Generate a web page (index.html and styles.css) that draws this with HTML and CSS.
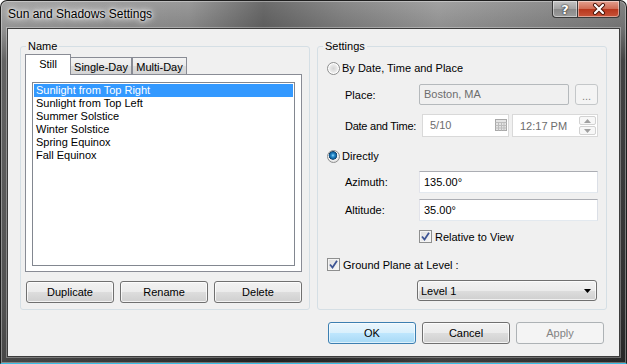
FILE: index.html
```html
<!DOCTYPE html>
<html lang="en">
<head>
  <meta charset="UTF-8" />
  <title>Sun and Shadows Settings</title>
  <link rel="stylesheet" href="styles.css">
</head>
<body>

<div class="window">
  <div class="titlebar">
    <span class="title">Sun and Shadows Settings</span>
    <div class="caption-btns">
      <span class="cap-btn help">?</span>
      <span class="cap-btn close">
        <svg width="16" height="12" viewBox="0 0 16 12">
          <path d="M4 2 L12 10 M12 2 L4 10" stroke="#4a1409" stroke-width="4" stroke-linecap="round" fill="none"/>
          <path d="M4 2 L12 10 M12 2 L4 10" stroke="#fff" stroke-width="2.2" stroke-linecap="round" fill="none"/>
        </svg>
      </span>
    </div>
  </div>

  <div class="client">
    <div class="groups">
      <fieldset class="group name-group">
        <legend>Name</legend>
        <div class="tabs">
          <span class="tab active">Still</span>
          <span class="tab single">Single-Day</span>
          <span class="tab multi">Multi-Day</span>
        </div>
        <div class="tab-panel">
          <ul class="list">
            <li class="selected">Sunlight from Top Right</li>
            <li>Sunlight from Top Left</li>
            <li>Summer Solstice</li>
            <li>Winter Solstice</li>
            <li>Spring Equinox</li>
            <li>Fall Equinox</li>
          </ul>
        </div>
        <div class="name-btns">
          <button class="btn">Duplicate</button>
          <button class="btn">Rename</button>
          <button class="btn">Delete</button>
        </div>
      </fieldset>

      <fieldset class="group settings-group">
        <legend>Settings</legend>
        <div class="row r-bydate"><span class="radio"></span>By Date, Time and Place</div>
        <div class="row r-place">
          <span class="lbl">Place:</span>
          <div class="input off grow">Boston, MA</div>
          <span class="dots">...</span>
        </div>
        <div class="row r-date">
          <span class="lbl tight">Date and Time:</span>
          <div class="input dim date">
            <span class="grow">5/10</span>
            <svg width="12" height="12" viewBox="0 0 12 12">
              <rect x="0.5" y="0.5" width="11" height="11" fill="#e4e4e4" stroke="#a8a8a8"/>
              <path d="M0.5 3.5 H11.5 M0.5 6.5 H11.5 M0.5 9 H11.5 M3.5 3.5 V11.5 M6.5 3.5 V11.5 M9 3.5 V11.5" stroke="#bdbdbd" fill="none"/>
            </svg>
          </div>
          <div class="input dim time grow">
            <span class="grow">12:17 PM</span>
            <span class="spin">
              <span class="spin-btn"><svg width="7" height="4" viewBox="0 0 7 4"><path d="M0 4 L3.5 0 L7 4 Z" fill="#a0a0a0"/></svg></span>
              <span class="spin-btn"><svg width="7" height="4" viewBox="0 0 7 4"><path d="M0 0 L3.5 4 L7 0 Z" fill="#a0a0a0"/></svg></span>
            </span>
          </div>
        </div>
        <div class="row r-directly"><span class="radio on"></span>Directly</div>
        <div class="row r-az">
          <span class="lbl">Azimuth:</span>
          <div class="input grow">135.00°</div>
        </div>
        <div class="row r-alt">
          <span class="lbl">Altitude:</span>
          <div class="input grow">35.00°</div>
        </div>
        <div class="row r-rel">
          <span class="check">
            <svg width="9" height="9" viewBox="0 0 9 9"><path d="M1 4.5 L3.5 7.5 L8 0.8" stroke="#3d5494" stroke-width="1.8" fill="none"/></svg>
          </span>Relative to View
        </div>
        <div class="row r-ground">
          <span class="check">
            <svg width="9" height="9" viewBox="0 0 9 9"><path d="M1 4.5 L3.5 7.5 L8 0.8" stroke="#3d5494" stroke-width="1.8" fill="none"/></svg>
          </span>Ground Plane at Level :
        </div>
        <div class="row r-combo">
          <div class="combo">
            <span class="grow">Level 1</span>
            <svg width="7" height="4" viewBox="0 0 7 4"><path d="M0 0 L7 0 L3.5 4 Z" fill="#000"/></svg>
          </div>
        </div>
      </fieldset>
    </div>

    <div class="dlg-btns">
      <button class="btn default">OK</button>
      <button class="btn">Cancel</button>
      <button class="btn disabled">Apply</button>
    </div>
  </div>
</div>

</body>
</html>
```

FILE: styles.css
```css
body {
  margin: 0;
  background: #fff;
  font-family: "Liberation Sans", Arial, sans-serif;
  font-size: 11px;
  color: #000;
}
.window {
  width: 627px;
  height: 364px;
  box-sizing: border-box;
  display: flex;
  flex-direction: column;
  border: 1px solid #1e1e1e;
  border-bottom-color: #39bfe6;
  border-radius: 7px 7px 0 0;
  background:
    linear-gradient(to right, rgba(255,255,255,0.12), rgba(0,0,0,0) 30%, rgba(0,0,0,0.3) 42%, rgba(0,0,0,0.1) 55%, rgba(255,255,255,0.08) 70%, rgba(0,0,0,0.15) 100%),
    linear-gradient(to bottom, #9a9a9a 0, #858585 27px, #4e4e4e 60px, #3a3a3a 300px, #2e2e2e 100%);
  box-shadow: inset 0 0 0 1px rgba(255,255,255,0.35);
}
.titlebar {
  height: 27px;
  display: flex;
  align-items: flex-start;
  justify-content: space-between;
  padding: 0 6px 0 7px;
}
.title {
  font-family: "Liberation Sans", Arial, sans-serif;
  font-size: 12px;
  line-height: 27px;
  text-shadow: 0 0 6px #fff, 0 0 10px #fff, 0 0 3px #fff;
}
.caption-btns {
  display: flex;
}
.cap-btn {
  height: 17px;
  box-sizing: border-box;
  display: flex;
  align-items: center;
  justify-content: center;
  border: 1px solid #3a3a3a;
  border-top: none;
  box-shadow: inset 0 0 0 1px rgba(255,255,255,0.45);
}
.help {
  width: 25px;
  border-radius: 0 0 0 4px;
  border-right: none;
  background: linear-gradient(#c4c4c4, #a2a2a2 50%, #8a8a8a 51%, #9c9c9c);
  color: #fff;
  font-family: "DejaVu Sans", sans-serif;
  font-weight: bold;
  font-size: 13px;
  text-shadow: 0 0 2px #222, 0 0 1px #222;
}
.close {
  width: 43px;
  border-radius: 0 0 4px 0;
  background: linear-gradient(#e3a08f, #cf6a52 50%, #b8361c 51%, #c8543a);
}

.client {
  flex: 1;
  margin: 0 6px 6px 6px;
  background: #f0f0f0;
  border: 1px solid #3c3c3c;
  box-shadow: 0 0 0 1px rgba(255,255,255,0.3);
  padding: 10px 12px 0 12px;
  display: flex;
  flex-direction: column;
}
.groups {
  display: flex;
  gap: 7px;
  height: 271px;
}
.group {
  margin: 0;
  width: 290px;
  box-sizing: border-box;
  border: 1px solid #d5dfe5;
  border-radius: 3px;
  min-width: 0;
  display: flex;
  flex-direction: column;
}
.group legend {
  padding: 0 2px;
  line-height: 14px;
}
.name-group {
  padding: 0 6px 6px 4px;
}
.name-group legend {
  margin-left: 1px;
}
.settings-group {
  padding: 0 8px 0 9px;
}
.settings-group legend {
  margin-left: -4px;
}

.tabs {
  margin-top: 1px;
  height: 20px;
  display: flex;
  align-items: flex-end;
}
.tab {
  height: 17px;
  box-sizing: border-box;
  border: 1px solid #898c95;
  border-bottom: none;
  background: linear-gradient(#f3f3f3, #ebebeb 50%, #dddddd 51%, #d4d4d4);
  display: flex;
  align-items: center;
  justify-content: center;
  padding-top: 1px;
}
.tab.active {
  height: 21px;
  width: 46px;
  margin-bottom: -1px;
  background: #fff;
  position: relative;
  z-index: 1;
  padding: 0 0 2px 0;
}
.tab.single {
  width: 61px;
  border-left: none;
}
.tab.multi {
  width: 55px;
}
.tab-panel {
  flex: 1;
  margin-right: 1px;
  background: #fff;
  border: 1px solid #898c95;
  padding: 7px 6px 5px 6px;
  display: flex;
}
.list {
  flex: 1;
  margin: 0;
  padding: 1px;
  list-style: none;
  border: 1px solid #828790;
}
.list li {
  line-height: 13px;
  height: 13px;
  padding-left: 2px;
  white-space: nowrap;
}
.list li.selected {
  background: #3399ff;
  color: #fff;
}
.name-btns {
  margin: 9px 0 0 1px;
  display: flex;
  gap: 6px;
}

.btn {
  width: 88px;
  height: 22px;
  padding: 0;
  font-family: "Liberation Sans", Arial, sans-serif;
  font-size: 11px;
  color: #000;
  border: 1px solid #707070;
  border-radius: 3px;
  background: linear-gradient(#f2f2f2, #ebebeb 50%, #dddddd 51%, #cfcfcf);
  box-shadow: inset 0 0 0 1px rgba(255,255,255,0.75);
}
.btn.default {
  border-color: #3c7fb1;
  background: linear-gradient(#eaf6fd, #d9f0fc 50%, #bee6fd 51%, #a7d9f5);
  box-shadow: inset 0 0 0 1px rgba(255,255,255,0.6);
}
.btn.disabled {
  border-color: #adb2b5;
  background: #f4f4f4;
  color: #838383;
  box-shadow: none;
}

.row {
  display: flex;
  align-items: center;
  flex-shrink: 0;
  white-space: nowrap;
}
.grow {
  flex: 1;
}
.lbl {
  width: 74px;
  padding-left: 18px;
  flex-shrink: 0;
  white-space: nowrap;
}
.lbl.tight {
  letter-spacing: -0.25px;
}
.r-bydate { margin-top: 8px; height: 14px; }
.r-place { margin-top: 9px; height: 21px; }
.r-date { margin-top: 9px; height: 23px; gap: 3px; }
.r-directly { margin-top: 12px; height: 14px; }
.r-az { margin-top: 8px; height: 22px; }
.r-alt { margin-top: 6px; height: 22px; }
.r-rel { margin-top: 9px; height: 13px; padding-left: 92px; }
.r-ground { margin-top: 15px; height: 13px; }
.r-combo { margin-top: 9px; height: 21px; padding-left: 90px; }

.radio {
  width: 13px;
  height: 13px;
  box-sizing: border-box;
  border-radius: 50%;
  border: 1px solid #8e8f8f;
  background: radial-gradient(circle at 50% 50%, #d4d4d4 0, #e6e6e6 3px, #f6f6f6 6px);
  box-shadow: inset 0 0 0 1px #fff;
  margin-right: 2px;
}
.radio.on {
  background: radial-gradient(circle at 45% 40%, #9be1ff 0, #2d8fd0 1.5px, #0b5a94 3.5px, #1a3f66 4px, #f4f4f4 4.6px, #e4e4e4 6px);
  box-shadow: none;
}
.check {
  width: 13px;
  height: 13px;
  box-sizing: border-box;
  border: 1px solid #8e8f8f;
  background: linear-gradient(135deg, #dcdcdc, #f8f8f8);
  box-shadow: inset 0 0 0 1px #f4f4f4;
  display: flex;
  align-items: center;
  justify-content: center;
  margin-right: 3px;
}

.input {
  height: 100%;
  box-sizing: border-box;
  background: #fff;
  border: 1px solid;
  border-color: #abadb3 #dbdfe6 #e3e9ef #e2e3ea;
  padding: 0 4px;
  display: flex;
  align-items: center;
  padding-bottom: 1px;
}
.input.off {
  background: #f0f0f0;
  border-color: #b5b9bc;
  border-radius: 2px;
  color: #6d6d6d;
  align-items: flex-start;
  padding-top: 3px;
}
.input.dim {
  color: #6d6d6d;
  border-color: #d9d9d9;
  padding-left: 7px;
}
.date {
  width: 87px;
  flex-shrink: 0;
  padding-right: 1px;
}
.time {
  padding: 0 1px 0 3px;
}
.spin {
  display: flex;
  flex-direction: column;
  gap: 1px;
  height: 19px;
}
.spin-btn {
  width: 17px;
  flex: 1;
  box-sizing: border-box;
  border: 1px solid #d2d2d2;
  border-radius: 2px;
  background: #f7f7f7;
  display: flex;
  align-items: center;
  justify-content: center;
}
.dots {
  width: 23px;
  height: 21px;
  box-sizing: border-box;
  margin-left: 6px;
  border: 1px solid #c4c7c9;
  border-radius: 3px;
  background: #f4f4f4;
  color: #838383;
  text-align: center;
  line-height: 22px;
}
.combo {
  width: 180px;
  height: 21px;
  box-sizing: border-box;
  border: 1px solid #707070;
  border-radius: 3px;
  background: linear-gradient(#f2f2f2, #ebebeb 50%, #dddddd 51%, #cfcfcf);
  box-shadow: inset 0 0 0 1px rgba(255,255,255,0.7);
  padding: 0 5px 0 3px;
  display: flex;
  align-items: center;
}

.dlg-btns {
  margin-top: 12px;
  padding-right: 3px;
  display: flex;
  justify-content: flex-end;
  gap: 6px;
}
```
